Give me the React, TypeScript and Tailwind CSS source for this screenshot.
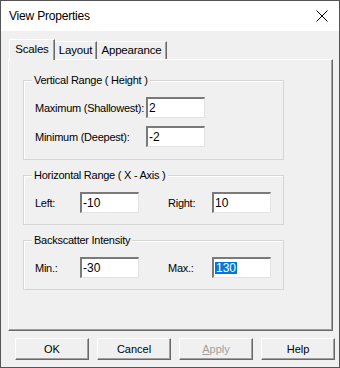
import React from 'react';

// Klasik Windows özellik penceresi: sekmeler, grup kutuları, alt butonlar.
const font = { fontFamily: '"Liberation Sans", Arial, sans-serif' };

const Field = ({ value, selected }: { value: string; selected?: boolean }) => (
    <div className="w-[59px] h-[21px] shrink-0 bg-white border-t-2 border-l-2 border-t-[#7a7a7a] border-l-[#7a7a7a] border-r border-b border-r-[#e3e3e3] border-b-[#e3e3e3] pl-[1px] flex items-center text-[12px] tracking-normal text-black leading-none">
        {selected ? <span className="bg-[#0078d7] text-white px-[1px]">{value}</span> : <span>{value}</span>}
    </div>
);

const Group = ({ title, className, children }: { title: string; className?: string; children: React.ReactNode }) => (
    <div className={`relative w-[261px] border border-[#d5d5d5] shadow-[inset_1px_1px_0_#fff] ${className ?? ''}`}>
        <span className="absolute -top-[8px] left-[8px] bg-[#f0f0f0] px-[2px] leading-[14px] whitespace-nowrap text-black">{title}</span>
        {children}
    </div>
);

const Btn = ({ label, disabled }: { label: React.ReactNode; disabled?: boolean }) => (
    <button className={`w-[74px] h-[22px] bg-[#f0f0f0] border border-t-white border-l-white border-r-[#696969] border-b-[#696969] shadow-[inset_-1px_-1px_0_#a0a0a0] text-[11px] leading-none ${disabled ? 'text-[#a0a0a0]' : 'text-black'}`}>
        {label}
    </button>
);

export default function App() {
    return (
        <div className="w-[340px] h-[368px] border border-[#555] bg-[#f0f0f0] flex flex-col overflow-hidden" style={font}>
            {/* Başlık çubuğu */}
            <div className="h-[30px] bg-white flex items-center justify-between pl-[8px] pr-[10px] shrink-0">
                <span className="text-[12px] tracking-[-0.2px] text-black">View Properties</span>
                <svg width="12" height="12" viewBox="0 0 12 12" className="mr-[1px]">
                    <path d="M0.5 0.5 L11.5 11.5 M11.5 0.5 L0.5 11.5" stroke="#000" strokeWidth="1" />
                </svg>
            </div>

            {/* Sekmeler */}
            <div className="flex items-end pl-[8px] pt-[7px] h-[28px] shrink-0 text-[11.5px] tracking-[-0.2px] text-black">
                <div className="relative z-10 w-[46px] h-[21px] -mb-[1px] bg-[#f0f0f0] border-t border-l border-t-white border-l-white border-r border-r-[#696969] shadow-[inset_-1px_0_0_#a0a0a0] flex items-center justify-center">
                    Scales
                </div>
                <div className="w-[42px] h-[18px] border-t border-t-white border-r border-r-[#696969] shadow-[inset_-1px_0_0_#a0a0a0] flex items-center justify-center">
                    Layout
                </div>
                <div className="w-[70px] h-[18px] border-t border-t-white border-r border-r-[#696969] shadow-[inset_-1px_0_0_#a0a0a0] flex items-center justify-center">
                    Appearance
                </div>
            </div>

            {/* Sekme paneli */}
            <div className="ml-[7px] w-[325px] h-[272px] border border-t-white border-l-white border-r-[#696969] border-b-[#696969] shadow-[inset_-1px_-1px_0_#a0a0a0] pl-[14px] pt-[20px] text-[11px] tracking-[-0.25px] text-black shrink-0">
                <Group title="Vertical Range ( Height )" className="h-[80px]">
                    <div className="flex items-center mt-[16px] pl-[11px]">
                        <span className="w-[111px] whitespace-nowrap pt-[2px]">Maximum (Shallowest):</span>
                        <Field value="2" />
                    </div>
                    <div className="flex items-center mt-[8px] pl-[11px]">
                        <span className="w-[111px] whitespace-nowrap pt-[2px]">Minimum (Deepest):</span>
                        <Field value="-2" />
                    </div>
                </Group>

                <Group title="Horizontal Range ( X - Axis )" className="h-[50px] mt-[15px]">
                    <div className="flex items-center mt-[16px] pl-[11px]">
                        <span className="w-[45px] pt-[2px]">Left:</span>
                        <Field value="-10" />
                        <span className="w-[73px] pl-[29px] pt-[2px]">Right:</span>
                        <Field value="10" />
                    </div>
                </Group>

                <Group title="Backscatter Intensity" className="h-[50px] mt-[15px]">
                    <div className="flex items-center mt-[16px] pl-[11px]">
                        <span className="w-[45px] pt-[2px]">Min.:</span>
                        <Field value="-30" />
                        <span className="w-[73px] pl-[29px] pt-[2px]">Max.:</span>
                        <Field value="130" selected />
                    </div>
                </Group>
            </div>

            {/* Alt butonlar */}
            <div className="flex gap-[8px] pl-[14px] pt-[7px]">
                <Btn label="OK" />
                <Btn label="Cancel" />
                <Btn label={<><span className="underline">A</span>pply</>} disabled />
                <Btn label="Help" />
            </div>
        </div>
    );
}
